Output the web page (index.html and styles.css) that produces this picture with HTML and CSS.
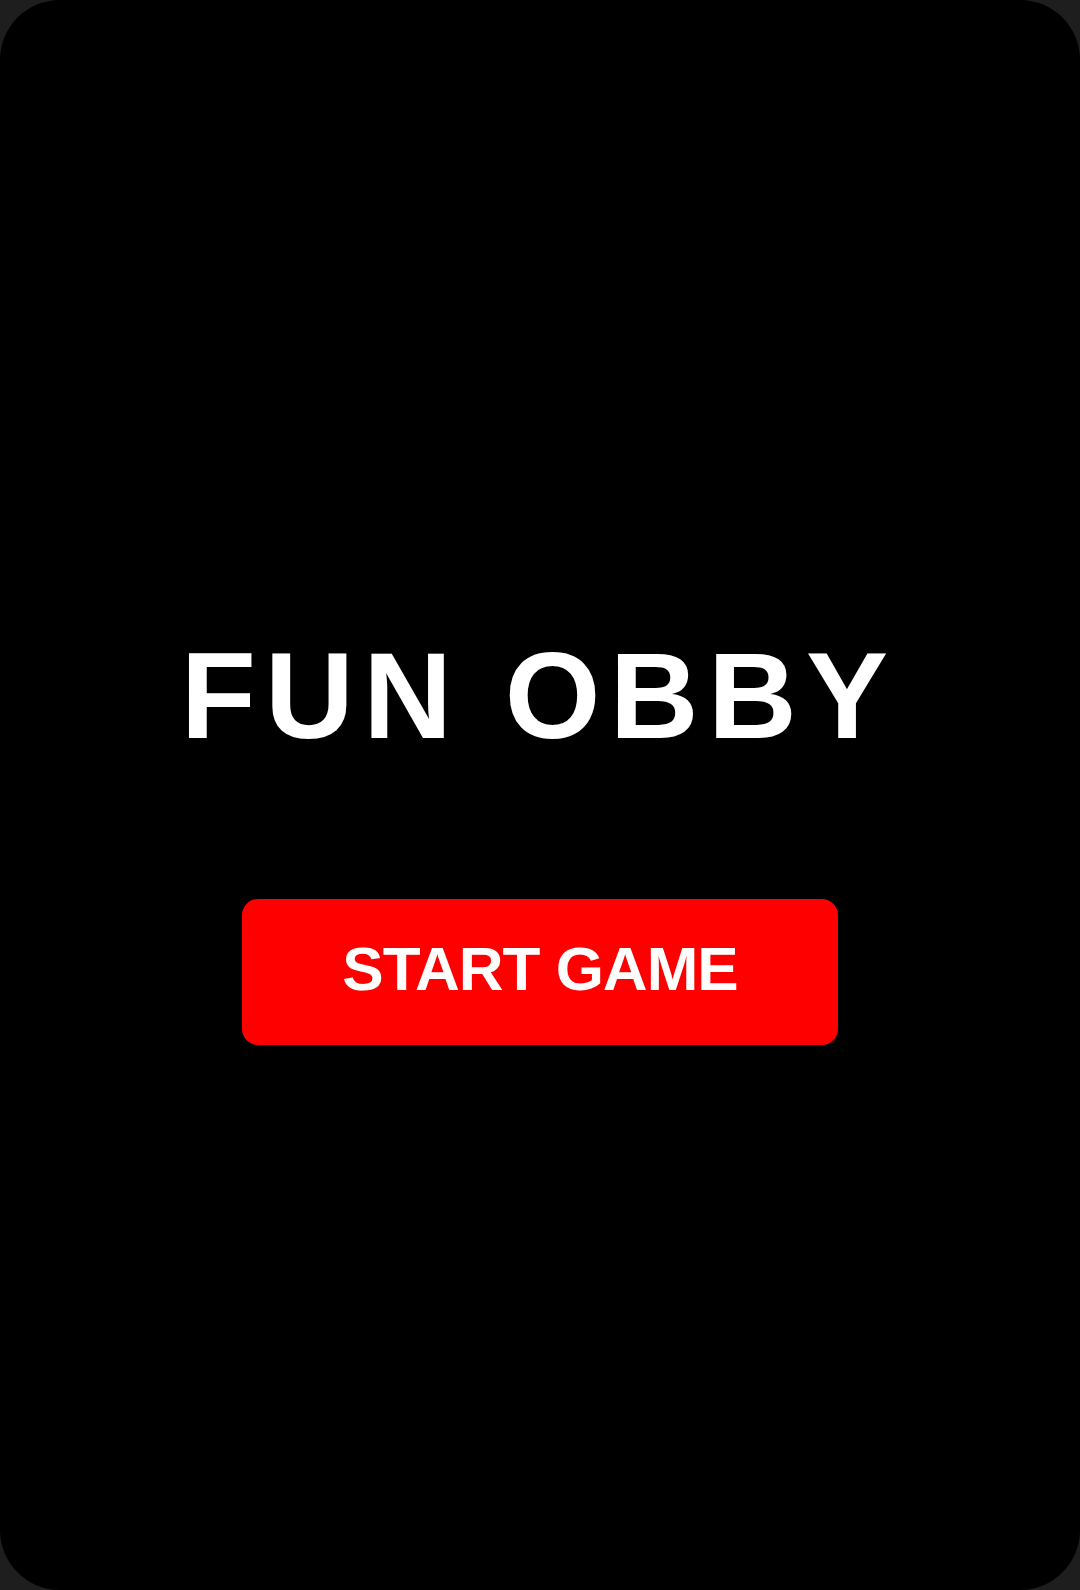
FILE: index.html
```html
<!DOCTYPE html>
<html>
<head>
<meta charset="utf-8">
<link rel="stylesheet" href="styles.css">
</head>
<body>
<div class="screen">
  <h1 class="title">FUN OBBY</h1>
  <button class="start">START GAME</button>
</div>
</body>
</html>
```
FILE: styles.css
```css
html, body {
  margin: 0;
  padding: 0;
  background: #1e1e1e;
}
.screen {
  width: 1080px;
  height: 1590px;
  box-sizing: border-box;
  background: #000;
  border-radius: 60px;
  display: flex;
  flex-direction: column;
  align-items: center;
  justify-content: center;
  padding-top: 88px;
  font-family: "Liberation Sans", Arial, sans-serif;
}
.title {
  margin: 0;
  color: #fff;
  font-size: 123px;
  font-weight: 700;
  line-height: 1;
  letter-spacing: 9.3px;
  margin-right: 2px;
}
.start {
  margin-top: 142px;
  width: 596px;
  height: 146px;
  border: none;
  border-radius: 16px;
  background: #ff0000;
  color: #fff;
  font-family: "Liberation Sans", Arial, sans-serif;
  font-size: 62px;
  font-weight: 700;
  letter-spacing: -1px;
  padding: 0 0 6px 0;
}
```
